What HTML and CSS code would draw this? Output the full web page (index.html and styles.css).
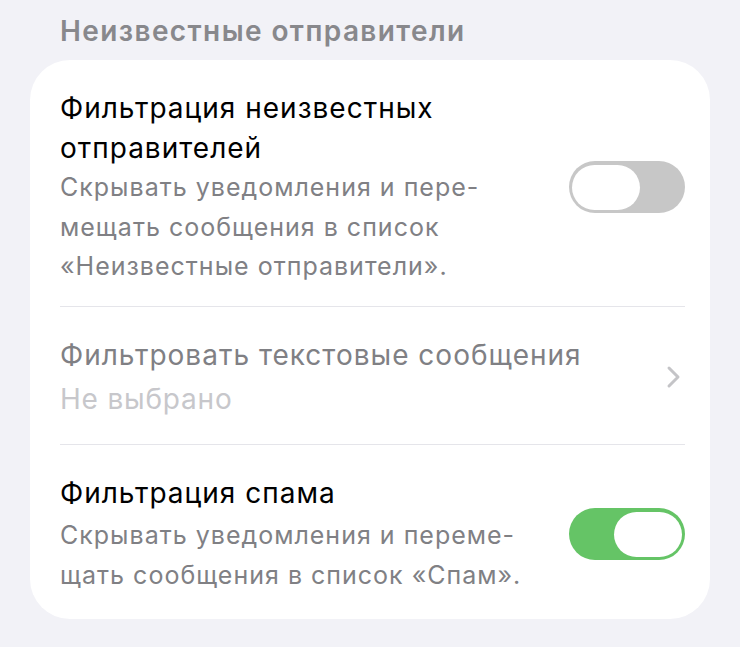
FILE: index.html
```html
<!DOCTYPE html>
<html lang="ru">
<head>
    <meta charset="UTF-8">
    <meta name="viewport" content="width=device-width, initial-scale=1.0">
    <title>Неизвестные отправители</title>
    <link rel="stylesheet" href="styles.css">
</head>
<body>
    <h2 class="section-title">Неизвестные отправители</h2>

    <div class="card">
        <div class="row">
            <div class="row-text">
                <div class="row-title">Фильтрация неизвестных<br>отправителей</div>
                <div class="row-subtitle">Скрывать уведомления и пере-<br>мещать сообщения в список<br>«Неизвестные отправители».</div>
            </div>
            <span class="switch"><span class="knob"></span></span>
        </div>

        <div class="row row-disabled">
            <div class="row-text">
                <div class="row-title">Фильтровать текстовые сообщения</div>
                <div class="row-value">Не выбрано</div>
            </div>
            <svg class="chevron" width="16" height="24" viewBox="0 0 16 24">
                <path d="M3 3 L12 12 L3 21" fill="none" stroke="#c4c4c7" stroke-width="3" stroke-linecap="round" stroke-linejoin="round"/>
            </svg>
        </div>

        <div class="row">
            <div class="row-text">
                <div class="row-title">Фильтрация спама</div>
                <div class="row-subtitle">Скрывать уведомления и переме-<br>щать сообщения в список «Спам».</div>
            </div>
            <span class="switch on"><span class="knob"></span></span>
        </div>
    </div>
</body>
</html>
```

FILE: styles.css
```css
body { margin: 0; background: #f2f2f7; font-family: "Inter", "Roboto", sans-serif; color: #000; }

.section-title { margin: 0; padding: 11px 60px 9px; font-size: 28px; line-height: 40px; font-weight: 600; letter-spacing: 1.4px; color: #88888c; }

.card { margin: 0 30px; background: #fff; border-radius: 40px; padding: 0 25px 0 30px; }

.row { display: flex; align-items: center; justify-content: space-between; padding: 28px 0 19px; border-bottom: 1px solid #e5e5ea; }
.row-disabled { padding-bottom: 25px; }
.row:last-child { border-bottom: none; padding-bottom: 24px; }
.row-text { flex: 1; }
.row-title { font-size: 28px; line-height: 40px; letter-spacing: 1px; }
.row-subtitle { font-size: 25px; line-height: 39.5px; letter-spacing: 1px; color: #808084; }
.row:last-child .row-subtitle { margin-top: 3px; }
.row-value { font-size: 28px; line-height: 39.5px; letter-spacing: 0.8px; color: #c7c7cb; margin-top: 5px; }
.row-disabled .row-title { color: #808084; }

.switch { width: 116px; height: 52px; border-radius: 26px; background: #c7c7c7; display: flex; align-items: center; padding: 0 3px; box-sizing: border-box; }
.switch .knob { width: 68px; height: 45px; border-radius: 23px; background: #fff; }
.switch.on { background: #65c466; justify-content: flex-end; }

.chevron { margin-right: 3px; }
```
